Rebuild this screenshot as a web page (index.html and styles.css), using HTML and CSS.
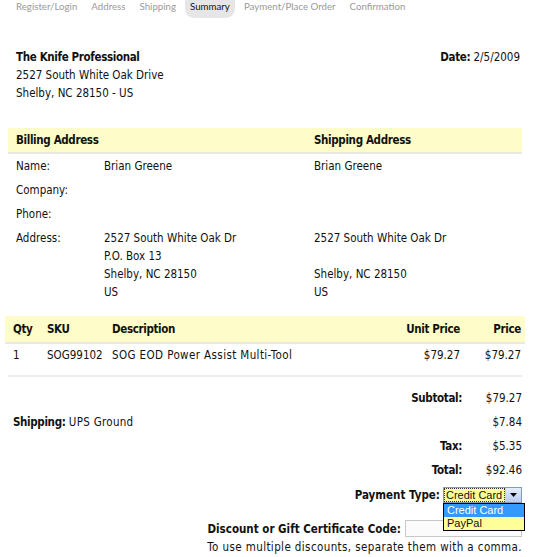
FILE: index.html
```html
<!DOCTYPE html>
<html>
<head>
<meta charset="utf-8">
<link rel="stylesheet" href="styles.css">
</head>
<body>
<ul class="steps">
  <li>Register/Login</li>
  <li>Address</li>
  <li>Shipping</li>
  <li class="current">Summary</li>
  <li>Payment/Place Order</li>
  <li>Confirmation</li>
</ul>

<div class="page">
  <div class="company">
    <div class="company-info">
      <div class="b">The Knife Professional</div>
      <div>2527 South White Oak Drive</div>
      <div>Shelby, NC 28150 - US</div>
    </div>
    <div class="date"><span class="b">Date:</span> 2/5/2009</div>
  </div>

  <div class="addr">
    <div class="addr-head">
      <div class="col-bill b">Billing Address</div>
      <div class="col-ship b">Shipping Address</div>
    </div>
    <div class="addr-row">
      <div class="lbl">Name:</div><div class="val">Brian Greene</div><div class="ship">Brian Greene</div>
    </div>
    <div class="addr-row">
      <div class="lbl">Company:</div><div class="val"></div><div class="ship"></div>
    </div>
    <div class="addr-row">
      <div class="lbl">Phone:</div><div class="val"></div><div class="ship"></div>
    </div>
    <div class="addr-row">
      <div class="lbl">Address:</div>
      <div class="val">2527 South White Oak Dr<br>P.O. Box 13<br>Shelby, NC 28150<br>US</div>
      <div class="ship">2527 South White Oak Dr<br>&nbsp;<br>Shelby, NC 28150<br>US</div>
    </div>
  </div>

  <div class="items">
    <div class="items-head b">
      <div class="c-qty">Qty</div><div class="c-sku">SKU</div><div class="c-desc">Description</div><div class="c-unit">Unit Price</div><div class="c-price">Price</div>
    </div>
    <div class="items-row">
      <div class="c-qty">1</div><div class="c-sku">SOG99102</div><div class="c-desc item-name">SOG EOD Power Assist Multi-Tool</div><div class="c-unit">$79.27</div><div class="c-price">$79.27</div>
    </div>
  </div>

  <div class="totals">
    <div class="t-row"><div class="t-left"></div><div class="t-lbl b">Subtotal:</div><div class="t-val">$79.27</div></div>
    <div class="t-row"><div class="t-left"><span class="b">Shipping:</span> <span class="method">UPS Ground</span></div><div class="t-lbl"></div><div class="t-val">$7.84</div></div>
    <div class="t-row"><div class="t-left"></div><div class="t-lbl b">Tax:</div><div class="t-val">$5.35</div></div>
    <div class="t-row"><div class="t-left"></div><div class="t-lbl b">Total:</div><div class="t-val">$92.46</div></div>
  </div>

  <div class="pay">
    <span class="b wide">Payment Type:</span>
    <div class="select">
      <div class="select-box"><span class="select-text">Credit Card</span><span class="select-btn"><svg width="8" height="4" viewBox="0 0 8 4"><path d="M0 0h7L3.5 4z" fill="#000"/></svg></span></div>
      <div class="select-list">
        <div class="opt sel">Credit Card</div>
        <div class="opt">PayPal</div>
      </div>
    </div>
  </div>

  <div class="discount">
    <span class="b wide">Discount or Gift Certificate Code:</span>
    <div class="input"></div>
  </div>
  <div class="note">To use multiple discounts, separate them with a comma.</div>
</div>
</body>
</html>
```

FILE: styles.css
```css
html, body {
  margin: 0;
  padding: 0;
  background: #fff;
}
body {
  font-family: "DejaVu Sans Condensed", "DejaVu Sans", sans-serif;
  font-size: 11.5px;
  color: #111;
}
.b {
  font-weight: bold;
  letter-spacing: -0.35px;
}
.b.wide {
  letter-spacing: 0;
}

.steps {
  list-style: none;
  margin: 0;
  padding: 0 0 0 9px;
  display: flex;
  gap: 4px;
  font-family: "Lato", "Open Sans", sans-serif;
  font-size: 9.7px;
  color: #9a9a9a;
}
.steps li {
  padding: 0 5px 6px;
  line-height: 12px;
}
.steps li:first-child {
  padding-left: 7px;
}
.steps li.current {
  background: #e6e6e6;
  color: #111;
  border-radius: 0 0 9px 9px;
}

.page {
  padding: 30px 11px 0 8px;
}

.company {
  display: flex;
  justify-content: space-between;
  padding: 0 2px 0 8px;
  line-height: 18px;
}

.addr {
  margin-top: 26px;
}
.addr-head {
  display: flex;
  background: #fefcc9;
  border-bottom: 2px solid #e8e8e4;
  height: 24px;
  align-items: center;
  padding-left: 8px;
}
.col-bill { width: 298px; }
.addr-row {
  display: flex;
  padding: 3px 0 3px 8px;
  line-height: 18px;
}
.lbl { width: 88px; }
.val { width: 210px; }

.items {
  margin: 12px -3px 0 -3px;
}
.items-head, .items-row {
  display: flex;
  padding: 0 4px 0 8px;
  line-height: 18px;
}
.items-head {
  background: #fefcc9;
  border-bottom: 2px solid #e8e8e4;
  padding-top: 4px;
  padding-bottom: 4px;
}
.items-row {
  padding-top: 2px;
  padding-bottom: 11px;
  border-bottom: 2px solid #ececec;
  margin: 0 3px;
  padding-left: 5px;
  padding-right: 1px;
}
.c-qty { width: 34px; }
.c-sku { width: 65px; }
.c-desc { flex: 1; }
.item-name { letter-spacing: 0.4px; }
.c-unit { width: 100px; text-align: right; }
.c-price { width: 61px; text-align: right; }

.totals {
  margin-top: 9px;
}
.t-row {
  display: flex;
  line-height: 18px;
  padding: 3px 0;
}
.t-left { flex: 1; padding-left: 5px; }
.method { letter-spacing: 0.3px; }
.t-lbl { width: 100px; text-align: right; }
.t-val { width: 60px; text-align: right; }

.pay {
  display: flex;
  justify-content: flex-end;
  align-items: center;
  gap: 3px;
  margin-top: 5px;
}
.select {
  position: relative;
  width: 79px;
}
.select-box {
  display: flex;
  height: 14px;
  border: 1px solid #7f9db9;
  background: #ffff99;
  font-family: "Liberation Sans", Arial, sans-serif;
  font-size: 11px;
}
.select-text {
  flex: 1;
  line-height: 12px;
  margin: 1px;
  outline: 1px dotted #333;
  padding-left: 1px;
}
.select-btn {
  width: 15px;
  display: flex;
  align-items: center;
  justify-content: center;
  background: linear-gradient(#e6eefc, #b8cbf0);
  border-left: 1px solid #c3d3fd;
}
.select-list {
  position: absolute;
  top: 16px;
  left: 0;
  width: 80px;
  border: 1px solid #000;
  background: #ffff99;
  font-family: "Liberation Sans", Arial, sans-serif;
  font-size: 11px;
  line-height: 13px;
}
.opt { padding-left: 3px; }
.opt.sel { background: #3399ff; color: #fff; }

.discount {
  display: flex;
  justify-content: flex-end;
  align-items: center;
  gap: 4px;
  margin-top: 17px;
}
.input {
  width: 115px;
  height: 15px;
  border: 1px solid #c8c8c8;
  background: #fbfbfb;
}
.note {
  text-align: right;
  margin-top: 2px;
  line-height: 16px;
  letter-spacing: 0.4px;
}
```
